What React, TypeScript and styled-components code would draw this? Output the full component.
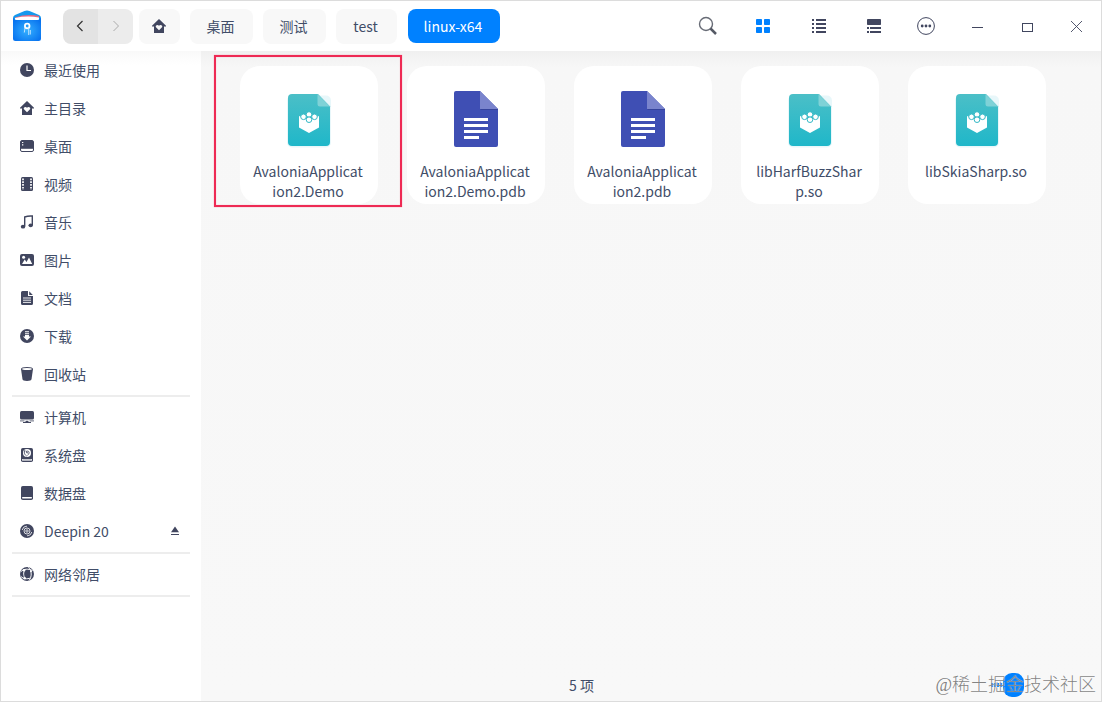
import React from "react";
import styled, { createGlobalStyle } from "styled-components";

const GlobalStyle = createGlobalStyle`
  body {
    margin: 0;
    background: #fff;
    overflow: hidden;
  }
  * {
    box-sizing: border-box;
  }
`;

const ink = "#414d68";
const iconColor = "#41465f";

const Window = styled.div`
  position: relative;
  display: flex;
  flex-direction: column;
  width: 1102px;
  height: 702px;
  border: 1px solid #dcdcdc;
  background: #fff;
  color: ${ink};
  font-family: "Noto Sans CJK SC", "Noto Sans", sans-serif;
  font-size: 14px;
`;

const TitleBar = styled.header`
  display: flex;
  align-items: center;
  flex: none;
  height: 50px;
  padding-left: 11px;
`;

const Logo = styled.svg`
  flex: none;
  width: 30px;
  height: 32px;
  margin-right: 21px;
`;

const NavGroup = styled.div`
  display: flex;
  height: 35px;
  border-radius: 8px;
  overflow: hidden;
`;

const NavButton = styled.div<{ $dim?: boolean }>`
  display: flex;
  align-items: center;
  justify-content: center;
  width: 35px;
  padding-right: ${(props) => (props.$dim ? 0 : 2)}px;
  color: ${(props) => (props.$dim ? "#aaa" : "#333")};
  background: ${(props) => (props.$dim ? "#ececec" : "#e3e3e3")};
`;

const Crumb = styled.div<{ $width: number; $gap: number; $active?: boolean }>`
  display: flex;
  align-items: center;
  justify-content: center;
  width: ${(props) => props.$width}px;
  height: ${(props) => (props.$active ? 34 : 35)}px;
  margin-left: ${(props) => props.$gap}px;
  padding-right: 2px;
  border-radius: 8px;
  color: ${(props) => (props.$active ? "#fff" : ink)};
  background: ${(props) => (props.$active ? "#0081ff" : "#f8f8f8")};
`;

const Tools = styled.div`
  display: flex;
  height: 50px;
  margin-left: auto;
`;

const Tool = styled.div<{ $width: number }>`
  display: flex;
  align-items: center;
  justify-content: center;
  width: ${(props) => props.$width}px;
`;

const Body = styled.div`
  display: flex;
  flex: 1;
  min-height: 0;
`;

const Sidebar = styled.nav`
  width: 200px;
  flex: none;
  background: linear-gradient(#f9f9f9, #fff 14px);
`;

const Place = styled.div`
  display: flex;
  align-items: center;
  height: 38px;
  padding: 0 21px 0 19px;
  line-height: 20px;

  svg {
    flex: none;
  }
`;

const PlaceName = styled.span`
  flex: 1;
  margin-left: 10px;
  padding-bottom: 1px;
`;

const Separator = styled.div`
  height: 2px;
  margin: 2px 11px 1px;
  background: #ededed;
`;

const Main = styled.main`
  display: flex;
  flex-direction: column;
  flex: 1;
  background: linear-gradient(#f0f0f0, #f7f7f7 16px, #f8f8f8);
`;

const Files = styled.div`
  display: grid;
  grid-template-columns: repeat(5, 138px);
  gap: 29px;
  padding: 15px 0 0 39px;
`;

const File = styled.div`
  display: flex;
  flex-direction: column;
  align-items: center;
  height: 138px;
  padding-top: 22px;
  border-radius: 20px;
  background: #fff;
`;

const FileName = styled.div`
  width: 118px;
  margin-top: 9px;
  padding-right: 2px;
  line-height: 20px;
  text-align: center;
  white-space: pre-line;
`;

const StatusBar = styled.footer`
  display: flex;
  justify-content: center;
  height: 30px;
  margin-top: auto;
  padding-right: 139px;
  line-height: 29px;
`;

const Highlight = styled.div`
  position: absolute;
  left: 213px;
  top: 54px;
  width: 188px;
  height: 152px;
  border: 2px solid #ee2a54;
  box-shadow: 0 0 1px #f58aa2, inset 0 0 1px #f58aa2;
`;

const ZoomSlider = styled.div`
  position: absolute;
  right: 77px;
  bottom: 4px;
  display: flex;
  align-items: center;
`;

const Ticks = styled.div`
  width: 12px;
  height: 4px;
  background: repeating-linear-gradient(90deg, #0081ff 0 2px, #c5dffb 2px 3px);
`;

const Knob = styled.div`
  width: 21px;
  height: 24px;
  border-radius: 9px;
  background: #0081ff;
`;

const Watermark = styled.div`
  position: absolute;
  right: 5px;
  bottom: 2px;
  color: rgba(115, 115, 115, 0.9);
  font-family: "Liberation Serif", "Noto Sans CJK SC", serif;
  font-size: 18px;
  font-weight: 300;
  line-height: 28px;
  white-space: nowrap;
  text-shadow: 0 0 1px #fff;
`;

const AppLogo = () => (
  <Logo viewBox="0 0 30 32">
    <defs>
      <radialGradient id="folder" cx="50%" cy="55%" r="60%">
        <stop offset="0" stopColor="#35b0ff" />
        <stop offset="1" stopColor="#0873ef" />
      </radialGradient>
    </defs>
    <path d="M1 8Q1 6 3 5L12.500 1Q15 0 17.500 1L27 5Q29 6 29 8V14H1Z" fill="#1499ee" />
    <path d="M3 7.500Q15 3.500 27 6V10H3Z" fill="#e66a80" />
    <path d="M3 8Q15 5.500 27 7.500V12H3Z" fill="#fff" />
    <path d="M1 7.500Q2 10 4.500 10H25.500Q28 10 29 7.500V28.500Q29 31 26.500 31H3.500Q1 31 1 28.500Z" fill="url(#folder)" />
    <circle cx="15.200" cy="16" r="2.300" fill="none" stroke="#fff" strokeWidth="1.800" />
    <path d="M13 18L12.300 22.500M16.700 17.500V25M18.300 20V24.500" stroke="#cfeaff" strokeWidth=".9" fill="none" />
  </Logo>
);

const HomeShape = () => (
  <path
    fillRule="evenodd"
    d="M7 0L14 6.700V7.600H12V14H2V7.600H0V6.700ZM7 11.300L10 8.300C11.200 6.700 8.500 4.800 7 6.700C5.500 4.800 2.800 6.700 4 8.300Z"
  />
);

const shapes: Record<string, React.ReactNode> = {
  recent: (
    <>
      <circle cx="7" cy="7" r="7" />
      <path d="M7 2.500V7.500H11" fill="none" stroke="#fff" strokeWidth="1.200" />
    </>
  ),
  home: <HomeShape />,
  desktop: (
    <>
      <rect x=".5" y="1.500" width="13" height="11" rx="1.500" fill="#fff" stroke={iconColor} />
      <path d="M1 2H13V9.800H1Z" />
      <path d="M2 3.500H3.300M2 5.800H3.300" stroke="#fff" strokeWidth="1.200" />
    </>
  ),
  video: (
    <>
      <rect x="1" y="0" width="12" height="14" rx="1.500" />
      <path d="M3 1.500V13M11 1.500V13" stroke="#fff" strokeWidth="1.700" strokeDasharray="1.700 1.100" />
    </>
  ),
  music: (
    <>
      <path d="M4.700 11.500V2Q8 .7 12.300 1V10" fill="none" stroke={iconColor} strokeWidth="1.400" />
      <ellipse cx="3" cy="11.700" rx="2.200" ry="1.900" />
      <ellipse cx="10.700" cy="10.300" rx="2.200" ry="1.900" />
    </>
  ),
  picture: (
    <>
      <rect x="0" y="1" width="14" height="12" rx="2" />
      <path d="M2 11L4.700 6.500L6.500 9L9 4.500L12.200 11Z" fill="#fff" />
      <circle cx="3.600" cy="4.200" r="1.500" fill="#fff" />
    </>
  ),
  document: (
    <>
      <path d="M2.500 0H8V5H13V12.500Q13 14 11.500 14H2.500Q1 14 1 12.500V1.500Q1 0 2.500 0ZM9.200 .2L12.800 3.900H9.200Z" />
      <path d="M3 7H11M3 9.200H11M3 11.400H11" stroke="#fff" strokeWidth=".9" />
    </>
  ),
  download: (
    <>
      <circle cx="7" cy="7" r="7" />
      <path d="M5 2.800H9M5 4.800H9M5 6.500H9" stroke="#fff" strokeWidth="1.100" />
      <path d="M5 6H9V7.500H11L7 11.500L3 7.500H5Z" fill="#fff" />
    </>
  ),
  trash: (
    <>
      <path d="M1 2Q1 0 7 0T13 2L11.500 12.300Q11.200 14 7 14T2.500 12.300Z" />
      <ellipse cx="7" cy="2.100" rx="4.900" ry="1" fill="#fff" />
    </>
  ),
  computer: (
    <>
      <rect x="0" y="1" width="14" height="8.600" rx="1.500" />
      <path d="M5.500 10.800H8.500V12H11V13H3V12H5.500Z" />
      <path d="M0 10.900H4.500M9.500 10.900H14" stroke={iconColor} strokeWidth=".8" />
    </>
  ),
  system: (
    <>
      <rect x="1" y="0" width="12" height="14" rx="1.800" />
      <circle cx="7" cy="5" r="4" fill="#fff" />
      <path d="M5 2C3.500 5 5 6.800 6.500 8M6 3.500C9.500 2 10 5.500 7.500 7.300M6 3.500Q6.500 5.500 8 4.800" fill="none" stroke={iconColor} strokeWidth=".9" />
      <rect x="2" y="11" width="10" height="1.800" rx=".8" fill="#fff" />
      <path d="M3 11.900H11" stroke={iconColor} strokeWidth=".5" />
    </>
  ),
  disk: (
    <>
      <rect x="1" y="0" width="12" height="14" rx="1.800" />
      <rect x="2" y="11" width="10" height="1.500" rx=".7" fill="#fff" />
    </>
  ),
  disc: (
    <>
      <circle cx="7" cy="7" r="7" />
      <g fill="none" stroke="#fff" strokeWidth=".8">
        <circle cx="7" cy="7" r="1.200" />
        <circle cx="7" cy="7" r="3" />
        <path d="M2.200 6A5 5 0 0 1 7 2.100M11.800 8A5 5 0 0 1 7 11.900" />
      </g>
    </>
  ),
  network: (
    <>
      <circle cx="7" cy="7" r="7" />
      <g fill="none" stroke="#fff" strokeWidth="1">
        <path d="M8.500 .3C12 4 12 10 9 13.500M1 4.500C4 1.800 8 1.500 12.500 3.500M5 2.500C3 5.500 3.300 9 5.500 12M1 9.500C3.500 12 7 12.300 10.500 11" />
      </g>
      <circle cx="4" cy="3.300" r="1.300" fill="#fff" />
      <circle cx="4.700" cy="11.200" r="1.200" fill="#fff" />
      <circle cx="11" cy="4.200" r="1" fill="#fff" />
    </>
  ),
};

const PlaceIcon = ({ name }: { name: string }) => (
  <svg width="14" height="14" viewBox="0 0 14 14" fill={iconColor}>
    {shapes[name]}
  </svg>
);

const ProgramIcon = () => (
  <svg width="64" height="64" viewBox="0 0 64 64">
    <defs>
      <linearGradient id="teal" x1="0" y1="0" x2="0" y2="1">
        <stop offset="0" stopColor="#4bbfc7" />
        <stop offset="1" stopColor="#1fb7c9" />
      </linearGradient>
    </defs>
    <rect x="10" y="7.500" width="44" height="52" rx="5" fill="#d9f1f7" opacity=".6" />
    <path d="M15 6H41L53 18.500V54Q53 58 49 58H15Q11 58 11 54V10Q11 6 15 6Z" fill="url(#teal)" />
    <path d="M40.500 6L53 18.500H43Q40.500 18.500 40.500 16Z" fill="#7fd2d7" />
    <path d="M22 28L32 32L42 28V39.500L32 45L22 39.500Z" fill="#fff" />
    <g fill="#fff" stroke="#36b9c6" strokeWidth="1">
      <circle cx="32" cy="26.500" r="2.800" />
      <circle cx="26.500" cy="28.800" r="2.800" />
      <circle cx="37.500" cy="28.800" r="2.800" />
      <circle cx="32" cy="31.700" r="2.800" />
    </g>
  </svg>
);

const TextIcon = () => (
  <svg width="64" height="64" viewBox="0 0 64 64">
    <path d="M12 3H36L54 21V57Q54 59 52 59H12Q10 59 10 57V5Q10 3 12 3Z" fill="#3f4fb4" />
    <path d="M36 3L54 21H36Z" fill="#7a84cd" />
    <path d="M36 21H54V22H37Z" fill="#35439c" />
    <path d="M20 31.500H44M20 37.500H44M20 43.500H44M20 49.500H35" stroke="#fff" strokeWidth="3" />
  </svg>
);

const groups = [
  [
    ["recent", "最近使用"],
    ["home", "主目录"],
    ["desktop", "桌面"],
    ["video", "视频"],
    ["music", "音乐"],
    ["picture", "图片"],
    ["document", "文档"],
    ["download", "下载"],
    ["trash", "回收站"],
  ],
  [
    ["computer", "计算机"],
    ["system", "系统盘"],
    ["disk", "数据盘"],
    ["disc", "Deepin 20"],
  ],
  [["network", "网络邻居"]],
];

const files = [
  { name: "AvaloniaApplicat\nion2.Demo", program: true },
  { name: "AvaloniaApplicat\nion2.Demo.pdb", program: false },
  { name: "AvaloniaApplicat\nion2.pdb", program: false },
  { name: "libHarfBuzzShar\np.so", program: true },
  { name: "libSkiaSharp.so", program: true },
];

const WindowTools = () => (
  <Tools>
    <Tool $width={56}>
      <svg width="20" height="20" viewBox="0 0 20 20" fill="none">
        <circle cx="8" cy="8" r="6.500" stroke="#686c76" strokeWidth="1.400" />
        <path d="M12.500 12.500L18 18" stroke="#555965" strokeWidth="2.500" />
      </svg>
    </Tool>
    <Tool $width={54}>
      <svg width="14" height="14" viewBox="0 0 14 14" fill="#0081ff">
        <rect width="6" height="6" rx=".8" />
        <rect x="8" width="6" height="6" rx=".8" />
        <rect y="8" width="6" height="6" rx=".8" />
        <rect x="8" y="8" width="6" height="6" rx=".8" />
      </svg>
    </Tool>
    <Tool $width={58}>
      <svg width="14" height="14" viewBox="0 0 14 14" fill={iconColor}>
        <path d="M0 0H2V2H0ZM4 0H14V2H4ZM0 4H2V6H0ZM4 4H14V6H4ZM0 8H2V10H0ZM4 8H14V10H4ZM0 12H2V14H0ZM4 12H14V14H4Z" />
      </svg>
    </Tool>
    <Tool $width={52}>
      <svg width="14" height="14" viewBox="0 0 14 14" fill={iconColor}>
        <rect width="14" height="6" rx=".8" />
        <path d="M0 8H2V10H0ZM3 8H14V10H3ZM0 12H2V14H0ZM3 12H14V14H3Z" />
      </svg>
    </Tool>
    <Tool $width={52}>
      <svg width="18" height="18" viewBox="0 0 18 18" fill={iconColor}>
        <circle cx="9" cy="9" r="8.400" fill="none" stroke={iconColor} />
        <circle cx="5.200" cy="9" r="1.400" />
        <circle cx="9" cy="9" r="1.400" />
        <circle cx="12.800" cy="9" r="1.400" />
      </svg>
    </Tool>
    <Tool $width={51}>
      <svg width="11" height="12" viewBox="0 0 11 12">
        <path d="M0 7.500H11" stroke={iconColor} />
      </svg>
    </Tool>
    <Tool $width={49}>
      <svg width="11" height="12" viewBox="0 0 11 12">
        <rect x=".5" y="3.500" width="10" height="8" fill="none" stroke={iconColor} />
      </svg>
    </Tool>
    <Tool $width={49}>
      <svg width="11" height="12" viewBox="0 0 11 12">
        <path d="M0 1L11 12M11 1L0 12" stroke="#41465f" strokeWidth=".9" />
      </svg>
    </Tool>
  </Tools>
);

const App: React.FC = () => {
  return (
    <Window>
      <GlobalStyle />
      <TitleBar>
        <AppLogo />
        <NavGroup>
          <NavButton>
            <svg width="8" height="12" viewBox="0 0 8 12" fill="none">
              <path d="M6.500 1L1.500 6L6.500 11" stroke="currentColor" strokeWidth="1.200" />
            </svg>
          </NavButton>
          <NavButton $dim>
            <svg width="8" height="12" viewBox="0 0 8 12" fill="none">
              <path d="M1.500 1L6.500 6L1.500 11" stroke="currentColor" />
            </svg>
          </NavButton>
        </NavGroup>
        <Crumb $width={41} $gap={6}>
          <svg width="14" height="14" viewBox="0 0 14 14" fill={iconColor}>
            <HomeShape />
          </svg>
        </Crumb>
        <Crumb $width={63} $gap={10}>桌面</Crumb>
        <Crumb $width={63} $gap={10}>测试</Crumb>
        <Crumb $width={61} $gap={10}>test</Crumb>
        <Crumb $width={92} $gap={11} $active>linux-x64</Crumb>
        <WindowTools />
      </TitleBar>
      <Body>
        <Sidebar>
          {groups.map((group, index) => (
            <React.Fragment key={index}>
              {group.map(([icon, label]) => (
                <Place key={icon}>
                  <PlaceIcon name={icon} />
                  <PlaceName>{label}</PlaceName>
                  {icon === "disc" && (
                    <svg width="10" height="10" viewBox="0 0 10 10" fill={iconColor}>
                      <path d="M5 .5L9 6.200H1ZM1 8H9V9H1Z" />
                    </svg>
                  )}
                </Place>
              ))}
              <Separator />
            </React.Fragment>
          ))}
        </Sidebar>
        <Main>
          <Files>
            {files.map((file) => (
              <File key={file.name}>
                {file.program ? <ProgramIcon /> : <TextIcon />}
                <FileName>{file.name}</FileName>
              </File>
            ))}
          </Files>
          <StatusBar>5 项</StatusBar>
        </Main>
      </Body>
      <Highlight />
      <ZoomSlider>
        <Ticks />
        <Knob />
      </ZoomSlider>
      <Watermark>@稀土掘金技术社区</Watermark>
    </Window>
  );
};

export default App;
